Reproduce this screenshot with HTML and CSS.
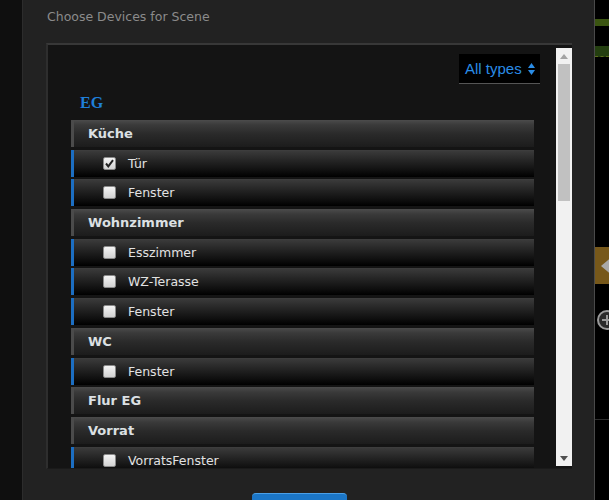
FILE: index.html
```html
<!DOCTYPE html>
<html>
<head>
<meta charset="utf-8">
<link rel="stylesheet" href="styles.css">
</head>
<body>
<div class="page">
  <div class="left-strip"></div>
  <div class="dialog">
    <div class="title">Choose Devices for Scene</div>
    <div class="box">
      <div class="list">
        <div class="type-bar">
          <div class="select">All types
            <svg class="sel-arrows" width="7" height="12" viewBox="0 0 7 12"><path d="M3.5 0 L7 5 L0 5 Z" fill="#2a8ce6"/><path d="M0 7 L7 7 L3.5 12 Z" fill="#2a8ce6"/></svg>
          </div>
        </div>
        <div class="floor">EG</div>
        <div class="rows">
          <div class="row room">Küche</div>
          <div class="row device"><span class="cb checked"><svg width="11" height="11" viewBox="0 0 11 11"><path d="M2 5.5 L4.3 8.3 L9 2.2" fill="none" stroke="#222" stroke-width="2"/></svg></span>Tür</div>
          <div class="row device"><span class="cb"></span>Fenster</div>
          <div class="row room">Wohnzimmer</div>
          <div class="row device"><span class="cb"></span>Esszimmer</div>
          <div class="row device"><span class="cb"></span>WZ-Terasse</div>
          <div class="row device"><span class="cb"></span>Fenster</div>
          <div class="row room">WC</div>
          <div class="row device"><span class="cb"></span>Fenster</div>
          <div class="row room">Flur EG</div>
          <div class="row room">Vorrat</div>
          <div class="row device"><span class="cb"></span>VorratsFenster</div>
        </div>
      </div>
      <div class="scrollbar">
        <div class="sb-btn"><svg width="8" height="5" viewBox="0 0 8 5"><path d="M0 5 L4 0 L8 5 Z" fill="#a3a3a3"/></svg></div>
        <div class="sb-track"><div class="sb-thumb"></div></div>
        <div class="sb-btn"><svg width="8" height="5" viewBox="0 0 8 5"><path d="M0 0 L8 0 L4 5 Z" fill="#505050"/></svg></div>
      </div>
    </div>
    <div class="footer"><div class="btn"></div></div>
  </div>
  <div class="right-strip">
    <div class="rs-bar"></div>
    <div class="rs-dash"></div>
    <div class="rs-brown"><svg width="12" height="20" viewBox="0 0 12 20"><path d="M0 10 L12 0 L12 20 Z" fill="#a9a9a9"/></svg></div>
    <div class="rs-circle"><span class="plus-h"></span><span class="plus-v"></span></div>
    <div class="rs-line"></div>
  </div>
</div>
</body>
</html>
```
FILE: styles.css
```css
html, body {
  margin: 0;
  padding: 0;
  background: #0f0f0f;
}
.page {
  display: flex;
  width: 609px;
  height: 500px;
  overflow: hidden;
  font-family: "DejaVu Sans", Verdana, sans-serif;
}
.left-strip {
  width: 22px;
  flex: none;
  background: #0f0f0f;
}
.dialog {
  width: 571px;
  flex: none;
  background: #222222;
  border-left: 1px solid #2c2c2c;
  border-right: 1px solid #4a4a4a;
}
.title {
  margin: 9px 0 0 24px;
  height: 15px;
  line-height: 15px;
  font-size: 12.5px;
  color: #8b8b8b;
}
.box {
  margin: 19px 0 0 23px;
  width: 524px;
  height: 423px;
  background: #141414;
  border-top: 2px solid #383838;
  border-left: 2px solid #2e2e2e;
  border-bottom: 1px solid #1a1a1a;
  display: flex;
}
.list {
  width: 508px;
  flex: none;
  overflow: hidden;
}
.type-bar {
  display: flex;
  justify-content: flex-end;
  margin: 9px 16px 0 0;
}
.select {
  width: 81px;
  height: 30px;
  box-sizing: border-box;
  background: #000;
  border-bottom: 1px solid #555;
  color: #2a8ce6;
  font-family: "Liberation Sans", Arial, sans-serif;
  font-size: 15px;
  line-height: 30px;
  padding-left: 6px;
  display: flex;
  align-items: center;
  gap: 6px;
}
.floor {
  height: 35px;
  padding-top: 1px;
  line-height: 35px;
  padding-left: 32px;
  font-family: "Liberation Serif", "Times New Roman", serif;
  font-weight: bold;
  font-size: 16px;
  color: #1f7fd8;
}
.rows {
  margin: 0 21px 0 23px;
  display: flex;
  flex-direction: column;
  gap: 2.7px;
}
.row {
  height: 27px;
  line-height: 27px;
  box-sizing: border-box;
  border-left: 3px solid #4b4b4b;
  border-right: 1px solid #141414;
  color: #e2e2e2;
  flex: none;
  display: flex;
  align-items: center;
}
.room {
  background: linear-gradient(#4c4c4c 0px, #484848 1px, #3a3a3a 5px, #2a2a2a 14px, #1c1c1c 27px);
  font-weight: bold;
  font-size: 13px;
  padding-left: 14px;
  color: #dce0e3;
}
.device {
  border-left-color: #1c6ec2;
  background: linear-gradient(#404040 0px, #3a3a3a 1px, #262626 10px, #0c0c0c 22px, #000 27px);
  font-size: 12.5px;
  padding-left: 29px;
}
.cb {
  width: 13px;
  height: 13px;
  box-sizing: border-box;
  border: 1px solid #8a8a8a;
  border-radius: 2px;
  background: linear-gradient(#f4f4f4, #d2d2d2);
  margin-right: 12px;
  flex: none;
  display: flex;
  align-items: center;
  justify-content: center;
}
.scrollbar {
  width: 16px;
  flex: none;
  margin-top: 3px;
  height: 418px;
  background: #f1f1f1;
  display: flex;
  flex-direction: column;
}
.sb-btn {
  height: 16px;
  flex: none;
  display: flex;
  align-items: center;
  justify-content: center;
}
.sb-track {
  flex: 1;
  padding: 0 2px;
}
.sb-thumb {
  height: 137px;
  background: #c1c1c1;
}
.footer {
  padding: 24px 0 0 229px;
}
.btn {
  width: 95px;
  height: 30px;
  box-sizing: border-box;
  background: #1b76c7;
  border-top: 1px solid #4aa0e8;
  border-radius: 4px;
}
.right-strip {
  flex: 1;
  background: #000;
  display: flex;
  flex-direction: column;
  overflow: hidden;
}
.rs-bar {
  margin-top: 19px;
  height: 7px;
  background: #3b5511;
}
.rs-dash {
  margin-top: 20px;
  height: 10px;
  background: #243f10;
  border-bottom: 1px dashed #5d6f1c;
}
.rs-brown {
  margin-top: 190px;
  height: 37px;
  background: #77581a;
  display: flex;
  align-items: center;
  padding-left: 6px;
}
.rs-circle {
  margin: 26px 0 0 2px;
  width: 20px;
  height: 20px;
  box-sizing: border-box;
  border: 2px solid #9a9a9a;
  border-radius: 50%;
  background: #2a2a2a;
  position: relative;
  flex: none;
}
.plus-h {
  position: absolute;
  left: 3px;
  top: 7px;
  width: 10px;
  height: 2px;
  background: #9a9a9a;
}
.plus-v {
  position: absolute;
  left: 7px;
  top: 3px;
  width: 2px;
  height: 10px;
  background: #9a9a9a;
}
.rs-line {
  margin-top: 89px;
  height: 1px;
  background: #2e2e2e;
}
```
